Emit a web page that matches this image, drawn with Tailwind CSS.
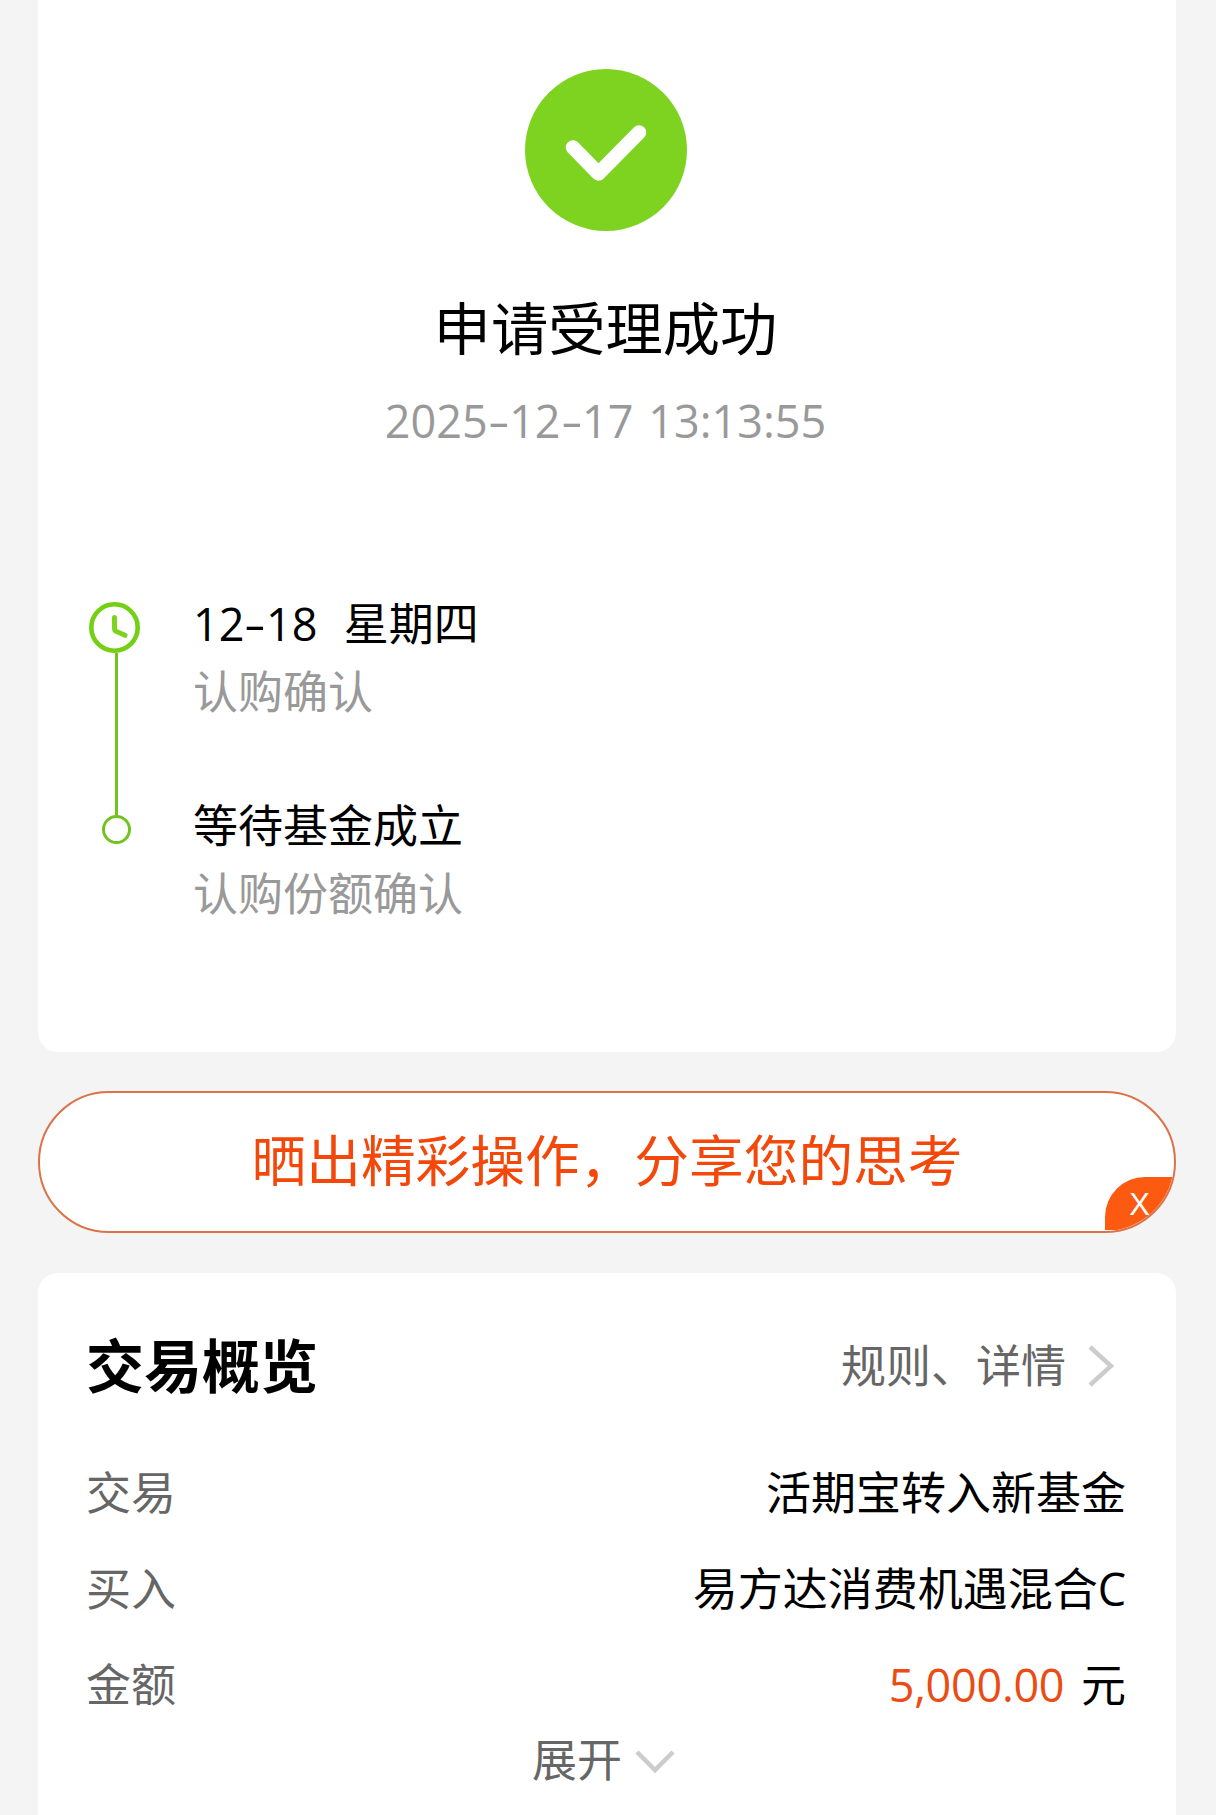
<!DOCTYPE html>
<html lang="zh-CN">
<head>
    <meta charset="UTF-8">
    <meta name="viewport" content="width=device-width, initial-scale=1.0">
    <title>申请受理成功</title>
    <script src="https://cdn.jsdelivr.net/npm/@tailwindcss/browser@4"></script>
</head>
<body class="bg-[#f4f4f4] font-['Open_Sans','Noto_Sans_CJK_SC',sans-serif] text-black">

    <div class="flex h-[1815px] flex-col overflow-hidden pl-[38px] pr-10 text-[45px] leading-[60px]">

        <!-- Result -->
        <section class="h-[1052px] shrink-0 rounded-b-[20px] bg-white pt-[69px]">
            <svg class="ml-[487px] h-[162px] w-[162px]" viewBox="0 0 162 162" fill="none">
                <circle cx="81" cy="81" r="81" fill="#7ed321" />
                <path d="M48 78.5l25.5 26L114 63.5" stroke="#fff" stroke-width="14.5" stroke-linecap="round" stroke-linejoin="round" />
            </svg>
            <h1 class="mt-[61px] pr-[3px] text-center text-[57.3px] leading-[72px]">申请受理成功</h1>
            <p class="mt-[27px] pr-[3px] text-center text-[#999]">2025<span class="inline-block scale-x-150 px-[3.5px]">-</span>12<span class="inline-block scale-x-150 px-[3.5px]">-</span>17 <span class="pl-[3px]">13:13:55</span></p>

            <div class="mt-[151px] flex pl-[51px]">
                <svg class="h-[243px] w-[51px] shrink-0" viewBox="0 0 51 243" fill="none">
                    <circle cx="25.5" cy="25.5" r="23.2" stroke="#74d014" stroke-width="4.6" />
                    <path d="M25.5 15.5V27q0 1.5 1.5 2.3l9 4" stroke="#7ed321" stroke-width="5" stroke-linecap="round" stroke-linejoin="round" />
                    <path d="M27.5 51v163" stroke="#71c322" stroke-width="3" />
                    <circle cx="27.5" cy="227.5" r="13" stroke="#71c322" stroke-width="3" />
                </svg>
                <div class="-mt-2 ml-[53px]">
                    <p class="whitespace-pre">12<span class="inline-block scale-x-150 px-[3.5px]">-</span>18  <span class="pl-[3px]">星期四</span></p>
                    <p class="mt-[8px] text-[#999]">认购确认</p>
                    <p class="mt-[74px]">等待基金成立</p>
                    <p class="mt-[8px] text-[#999]">认购份额确认</p>
                </div>
            </div>
        </section>

        <!-- Share banner -->
        <div class="relative mt-[39px] flex h-[142px] shrink-0 items-center justify-center overflow-hidden rounded-full border-2 border-[#dc7248] bg-white">
            <span class="pb-1 text-[54.7px] text-[#f4480b]">晒出精彩操作，分享您的思考</span>
            <span class="absolute right-0 bottom-[1px] flex h-[53px] w-[69px] items-center justify-center rounded-tl-[40px] bg-[#fb5a10] pt-[2px] font-['Liberation_Sans',sans-serif] text-[31px] text-white">X</span>
        </div>

        <!-- Overview -->
        <section class="mt-10 h-[560px] shrink-0 rounded-t-[20px] bg-white pt-[63px] pr-[50px] pl-[48px]">
            <div class="flex items-center justify-between">
                <h2 class="text-[58px] font-bold">交易概览</h2>
                <div class="flex items-center pr-[12px] text-[#666]">
                    <span>规则、详情</span>
                    <svg class="ml-[22px] h-[42px] w-[26px]" viewBox="0 0 26 42" fill="none"><path d="M2 2l21 19L2 40" stroke="#ccc" stroke-width="4.5" /></svg>
                </div>
            </div>
            <div class="mt-[67px] space-y-9">
                <div class="flex justify-between">
                    <span class="text-[#666]">交易</span>
                    <span>活期宝转入新基金</span>
                </div>
                <div class="flex justify-between">
                    <span class="text-[#666]">买入</span>
                    <span>易方达消费机遇混合C</span>
                </div>
                <div class="flex justify-between">
                    <span class="text-[#666]">金额</span>
                    <span><span class="pr-[5px] tracking-[-0.3px] text-[#ea4c14]">5,000.00</span> 元</span>
                </div>
            </div>
            <div class="mt-[15px] flex items-center pl-[446px] text-[#666]">
                <span>展开</span>
                <svg class="mt-[4px] ml-[13px] h-6 w-10" viewBox="0 0 40 24" fill="none"><path d="M2 2l18 18L38 2" stroke="#ccc" stroke-width="4.5" /></svg>
            </div>
        </section>

    </div>

</body>
</html>
